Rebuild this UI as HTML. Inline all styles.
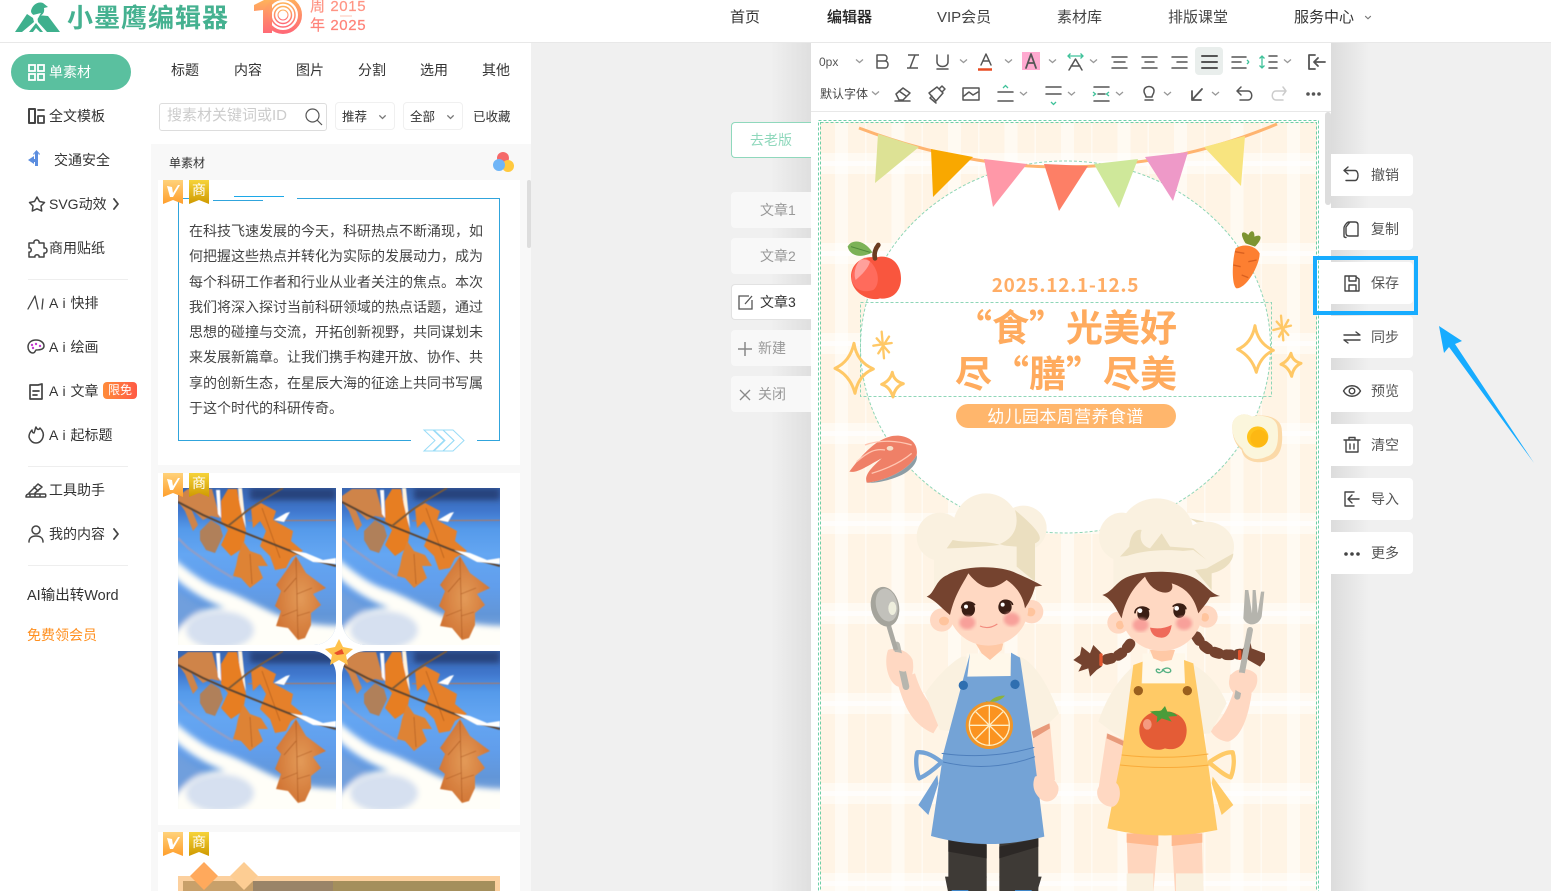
<!DOCTYPE html>
<html lang="zh-CN"><head><meta charset="utf-8"><title>小墨鹰编辑器</title>
<style>
*{box-sizing:border-box}
html,body{margin:0;padding:0;width:1551px;height:891px;overflow:hidden;background:#f0f0f0}
body{position:relative;font-family:"Liberation Sans","Noto Sans CJK SC",sans-serif;color:#333;font-size:14px}
.a{position:absolute}
.t{position:absolute;white-space:nowrap;line-height:20px}
svg{position:absolute;overflow:visible}
.ic{fill:none;stroke:#555;stroke-width:1.5;stroke-linecap:round;stroke-linejoin:round}
.card{position:absolute;left:158px;width:362px;background:#fff}
.im{position:absolute;width:158px;height:158px;overflow:hidden}
.tab{position:absolute;left:731px;width:80px;height:36px;background:#f8f8f8;border-radius:4px 0 0 4px}
.btn{position:absolute;left:1331px;width:82px;height:42px;background:#fff;border-radius:0 4px 4px 0}
.btn span{position:absolute;left:40px;top:11px;line-height:20px;font-size:14px;color:#555;white-space:nowrap}
.drop{position:absolute;top:102px;height:28px;border:1px solid #f0f0f0;border-radius:4px;background:#fff}
</style></head>
<body>
<svg width="0" height="0" style="position:absolute">
<defs>
<symbol id="chev" viewBox="0 0 10 6"><path d="M1.500 1.200 5 4.600 8.500 1.200" fill="none" stroke="#777" stroke-width="1.400"/></symbol>
<linearGradient id="sky" x1="0" y1="0" x2="0" y2="1"><stop offset="0" stop-color="#3a66b0"/><stop offset=".14" stop-color="#3f76cc"/><stop offset=".26" stop-color="#559aea"/><stop offset=".42" stop-color="#64a6f2"/><stop offset=".62" stop-color="#619eec"/><stop offset=".8" stop-color="#6296d8"/><stop offset="1" stop-color="#8fb0de"/></linearGradient>
<linearGradient id="bA" x1="0" y1="0" x2="0" y2="1"><stop offset="0" stop-color="#ffd27a"/><stop offset="1" stop-color="#ff9e2c"/></linearGradient>
<linearGradient id="bB" x1="0" y1="0" x2="0" y2="1"><stop offset="0" stop-color="#f6d33a"/><stop offset="1" stop-color="#cf9a00"/></linearGradient>
<linearGradient id="ten" x1="0" y1="0" x2="0" y2="1"><stop offset="0" stop-color="#ffb25b"/><stop offset="1" stop-color="#ff6a76"/></linearGradient>
<radialGradient id="lf1" cx=".5" cy=".5" r=".6"><stop offset="0" stop-color="#e39a58"/><stop offset="1" stop-color="#cf7030"/></radialGradient>
<filter id="b3"><feGaussianBlur stdDeviation="3"/></filter>
<filter id="b1"><feGaussianBlur stdDeviation=".5"/></filter>
<filter id="b2"><feGaussianBlur stdDeviation="5"/></filter>
<symbol id="leaf" viewBox="0 0 158 158">
<rect width="158" height="158" fill="url(#sky)"/>
<g filter="url(#b3)">
<rect x="72" y="0" width="86" height="12" fill="#27427c"/>
<path d="M-5 70 C5 78 20 92 40 100 C65 108 85 122 108 130 C125 136 145 138 165 138 V165 H-5 V148 C5 130 25 118 48 120 C25 112 8 100 -5 88Z" fill="#fffef8"/>
<path d="M-5 100 C8 108 18 116 26 120 C12 128 2 138 -5 148Z" fill="#6f9fdd"/>
<ellipse cx="42" cy="142" rx="34" ry="19" fill="#d6e0f0"/>
<path d="M95 158 L130 140 L160 140 L160 160Z" fill="#fffef8"/>
</g>
<path d="M0 50 L10 60 L35 78 L55 90" stroke="#8b9ecb" stroke-width="2.500" fill="none" filter="url(#b1)"/>
<path d="M70 33 L158 32" stroke="#8f7f88" stroke-width="2" fill="none" filter="url(#b1)"/>
<g filter="url(#b1)" stroke-linejoin="round">
<path d="M0 8 10 1 34 1 42 30 33 28 25 32 13 20 20 37 15 43 7 23 0 13Z" fill="#cf8448"/>
<path d="M38 2 42 2 43 30 40 26Z" fill="#fff"/>
<path d="M60 0H64L68 40 62 22Z" fill="#fff3dd"/>
<path d="M22 43 33 32 42 38 45 48 37 65 28 62 22 52Z" fill="#b0805a"/>
<path d="M50 1 59 1 62 17 68 43 65 60 53 68 43 57 50 42 43 33 43 13Z" fill="#e77e20"/>
<path d="M65 53 72 63 83 67 90 78 80 78 85 90 72 100 63 90 55 88 58 78 60 68Z" fill="#de8336"/>
<path d="M73 20 83 15 98 23 95 32 115 43 113 53 125 63 113 70 108 80 97 82 92 68 82 58 88 43 82 33 75 40Z" fill="#e58029"/>
<path d="M118 68 128 85 148 100 135 106 143 117 133 125 133 137 127 150 120 152 110 140 98 138 103 123 97 118 103 103 98 97 110 80Z" fill="url(#lf1)"/>
<path d="M118 70 120 150M118 90 106 104M119 106 134 100M119 122 104 128M119 128 132 124M84 20 102 70M72 66 74 96" stroke="#a9551c" stroke-width=".6" fill="none"/>
</g>
<path d="M0 14 L25 27 L50 38 L80 50 L110 62 L140 73 L158 78" stroke="#5d4430" stroke-width="2" fill="none" filter="url(#b1)"/>
<path d="M50 38 L70 22 L85 12 L105 0" stroke="#7a5a38" stroke-width="1.800" fill="none" filter="url(#b1)"/>
<path d="M112 62 L128 65 L145 72 L158 70 L158 76 L135 74Z" fill="#fff" filter="url(#b1)"/>
<path d="M96 32 L108 25 L112 24 L106 34Z" fill="#fff" filter="url(#b1)"/>
</symbol>
<symbol id="bdA" viewBox="0 0 20 24"><path d="M0 0H20V24L10 20 0 24Z" fill="url(#bA)"/><path d="M4 6 9 7 10 13 15 5 17 5 10 17 7 17Z" fill="#fff"/></symbol>
<symbol id="bdB" viewBox="0 0 20 24"><path d="M0 0H20V24L10 20 0 24Z" fill="url(#bB)"/></symbol>
</defs>
</svg>

<!-- editor backdrop gradients -->
<div class="a" style="left:770px;top:43px;width:41px;height:848px;background:linear-gradient(90deg,#f0f0f0,#dfdfdf)"></div>
<div class="a" style="left:1331px;top:43px;width:38px;height:848px;background:linear-gradient(90deg,#dcdcdc,#f0f0f0)"></div>

<!-- header -->
<div class="a" style="left:0;top:0;width:1551px;height:43px;background:#fff;border-bottom:1px solid #e8e8e8"></div>
<svg style="left:0;top:0" width="320" height="42">
<g fill="#3eb08d">
<path d="M15 32 27 14 33 18 34 22 22 32Z"/>
<path d="M37 15 48 16 60 32 47 32 38 22Z"/>
<path d="M29 32 36 23 43 32 40 32 36 28 33 32Z"/>
<path d="M31 11C32 5 38 1 43 3L48 7 44 8C45 13 42 16 38 16 34 16 31 14 31 11Z"/>
</g>
<path d="M33 15 41 13 37 20Z" fill="#fff"/>
<path d="M254 5 264 0H272V33H263V10L254 11Z" fill="url(#ten)"/>
<circle cx="283" cy="15" r="17" fill="none" stroke="url(#ten)" stroke-width="4"/>
<circle cx="283" cy="15" r="12" fill="none" stroke="url(#ten)" stroke-width="1.500"/>
<circle cx="283" cy="15" r="8.500" fill="none" stroke="url(#ten)" stroke-width="1.500"/>
<circle cx="283" cy="15" r="5" fill="none" stroke="url(#ten)" stroke-width="1"/>
<path d="M340 16H352" stroke="#ffc5b5" stroke-width="1"/>
</svg>
<div class="t" style="left:67px;top:4px;font-size:26px;line-height:28px;font-weight:700;letter-spacing:1px;color:#45b190">小墨鹰编辑器</div>
<div class="t" style="left:310px;top:-3px;font-size:15px;color:#ff9484;letter-spacing:.6px;-webkit-text-stroke:.2px #ff9484">周 2015</div>
<div class="t" style="left:310px;top:16px;font-size:15px;color:#ff8278;letter-spacing:.6px;-webkit-text-stroke:.2px #ff8278">年 2025</div>
<div class="t" style="left:730px;top:8px;color:#333;font-size:15px">首页</div>
<div class="t" style="left:827px;top:8px;color:#222;font-size:15px;-webkit-text-stroke:.3px #222">编辑器</div>
<div class="t" style="left:937px;top:8px;color:#444;font-size:15px">VIP会员</div>
<div class="t" style="left:1057px;top:8px;color:#444;font-size:15px">素材库</div>
<div class="t" style="left:1168px;top:8px;color:#444;font-size:15px">排版课堂</div>
<div class="t" style="left:1294px;top:8px;color:#333;font-size:15px">服务中心</div>
<svg style="left:1364px;top:15px" width="8" height="5"><use href="#chev" width="8" height="5"/></svg>

<!-- sidebar -->
<div class="a" style="left:0;top:43px;width:151px;height:848px;background:#fff"></div>
<div class="a" style="left:11px;top:54px;width:120px;height:36px;border-radius:18px;background:#5ac09f"></div>
<div class="t" style="left:49px;top:62px;color:#fff;font-size:14px">单素材</div>
<svg style="left:0;top:0" width="151" height="660">
<g fill="none" stroke="#fff" stroke-width="1.800"><rect x="29" y="65" width="6" height="6"/><rect x="38" y="65" width="6" height="6"/><rect x="29" y="74" width="6" height="6"/><rect x="38" y="74" width="6" height="6"/></g>
<g class="ic" style="stroke:#444">
<rect x="29" y="109" width="6" height="14" stroke-width="2"/><path d="M38 110h6M38 116h6v7h-6z" stroke-width="1.800"/>
<path d="M37 197l2.500 4.500 5 1-3.500 3.500 .7 5-4.700-2.200-4.700 2.200 .7-5-3.500-3.500 5-1z"/>
<path d="M29 243h5c-1-4 6-4 5 0h5v5c4-1 4 6 0 5v4h-5c1-3-5-3-4 0h-6v-5c3 1 3-5 0-4z"/>
<path d="M28 309 35 296 38 309M43 299l-1 10" stroke-width="1.300"/>
<path d="M36 340c-5 0-8 3-8 7 0 3 2 6 5 6 2 0 2-2 3-3 2 0 8 0 8-4 0-3-3-6-8-6z"/>
<path d="M30 385h8l4-1v15H30zM33 391h6M33 395h4" stroke-width="1.700"/>
<path d="M36 427c1 3 3 3 4 1 3 3 4 6 3 9-1 4-4 6-7 6s-6-2-7-6c0-3 1-5 3-7 0 2 1 3 2 3 1-2 1-4 2-6z"/>
<path d="M26 497c0-2 1-3 3-3h16c1 0 1 3 0 3zM29 493l9-9 4 3-7 6M34 487l4 4M30 497v-3M35 497v-3M40 497v-3"/>
<circle cx="36" cy="530" r="4"/><path d="M29 542c0-4 3-6 7-6s7 2 7 6"/>
<path d="M114 199l4 5-4 5M114 529l4 5-4 5" stroke-width="1.800"/>
</g>
<path d="M35 153v13h3v-13l1 2 1-1-3.500-4-3.500 4 1 1z" fill="#5b8ddf"/><path d="M28 160l6-4v3h1v3h-1v2z" fill="#5b8ddf"/>
<circle cx="32" cy="345" r="1.200" fill="#c33bd0"/><circle cx="36" cy="344" r="1.200" fill="#c33bd0"/><circle cx="40" cy="346" r="1.200" fill="#c33bd0"/><circle cx="33" cy="348" r="1.200" fill="#c33bd0"/>
<rect x="28" y="279" width="100" height="1" fill="#eee"/>
<rect x="28" y="466" width="100" height="1" fill="#eee"/>
<rect x="28" y="565" width="100" height="1" fill="#eee"/>
</svg>
<div class="t" style="left:49px;top:106px">全文模板</div>
<div class="t" style="left:54px;top:150px">交通安全</div>
<div class="t" style="left:49px;top:194px">SVG动效</div>
<div class="t" style="left:49px;top:238px">商用贴纸</div>
<div class="t" style="left:49px;top:293px;word-spacing:1px">A i 快排</div>
<div class="t" style="left:49px;top:337px;word-spacing:1px">A i 绘画</div>
<div class="t" style="left:49px;top:381px;word-spacing:1px">A i 文章</div>
<div class="t" style="left:103px;top:382px;width:34px;height:17px;line-height:17px;text-align:center;border-radius:4px;background:linear-gradient(90deg,#ff8c3a,#ff5a45);color:#fff;font-size:12px">限免</div>
<div class="t" style="left:49px;top:425px;word-spacing:1px">A i 起标题</div>
<div class="t" style="left:49px;top:480px">工具助手</div>
<div class="t" style="left:49px;top:524px">我的内容</div>
<div class="t" style="left:27px;top:586px;font-size:14.500px">AI输出转Word</div>
<div class="t" style="left:27px;top:625px;font-size:14px;color:#ff8f1f">免费领会员</div>

<!-- material panel -->
<div class="a" style="left:151px;top:43px;width:380px;height:101px;background:#fff"></div>
<div class="a" style="left:151px;top:144px;width:380px;height:747px;background:#f8f8f8"></div>
<div class="t" style="left:171px;top:60px">标题</div>
<div class="t" style="left:234px;top:60px">内容</div>
<div class="t" style="left:296px;top:60px">图片</div>
<div class="t" style="left:358px;top:60px">分割</div>
<div class="t" style="left:420px;top:60px">选用</div>
<div class="t" style="left:482px;top:60px">其他</div>
<div class="a" style="left:159px;top:103px;width:168px;height:28px;border:1px solid #ddd;border-radius:3px;background:#fff"></div>
<div class="t" style="left:167px;top:106px;color:#ccc;font-size:15px">搜素材关键词或ID</div>
<svg style="left:304px;top:107px" width="20" height="20"><circle cx="8.500" cy="8.500" r="6.500" fill="none" stroke="#555" stroke-width="1.200"/><path d="M13 13l5 5" stroke="#555" stroke-width="1.200"/></svg>
<div class="drop" style="left:335px;width:60px"></div>
<div class="t" style="left:342px;top:107px;font-size:12.500px;color:#333">推荐</div>
<svg style="left:378px;top:114px" width="9" height="6"><use href="#chev" width="9" height="6"/></svg>
<div class="drop" style="left:403px;width:60px"></div>
<div class="t" style="left:410px;top:107px;font-size:12.500px;color:#333">全部</div>
<svg style="left:446px;top:114px" width="9" height="6"><use href="#chev" width="9" height="6"/></svg>
<div class="t" style="left:473px;top:107px;font-size:12.500px;color:#333">已收藏</div>
<div class="t" style="left:169px;top:153px;font-size:12px">单素材</div>
<svg style="left:490px;top:150px" width="26" height="26"><circle cx="13" cy="8" r="6" fill="#f5696a"/><circle cx="18" cy="16" r="6" fill="#ffc93f"/><circle cx="9" cy="15" r="6" fill="#6fb5f7"/></svg>
<div class="a" style="left:527px;top:180px;width:4px;height:68px;background:#ddd;border-radius:2px"></div>

<!-- card 1 -->
<div class="card" style="top:180px;height:285px"></div>
<svg style="left:158px;top:180px" width="362" height="285">
<path d="M20.500 18.500H31M20.500 18.500V260.500H253M319 260.500H341.500V18.500H139" fill="none" stroke="#30a4dc" stroke-width="1"/>
<path d="M55 20.500H105" stroke="#30a4dc" stroke-width="1"/><path d="M76 16.500H126" stroke="#1ca8e8" stroke-width="1"/>
<g fill="none" stroke="#9adcf7" stroke-width="1"><path d="M266 250h10l11 10.500-11 10.500h-10l11-10.500z"/><path d="M275 250h10l11 10.500-11 10.500h-10l11-10.500z"/><path d="M285 250h10l11 10.500-11 10.500h-10l11-10.500z"/></g>
<use href="#bdA" x="5" y="0" width="20" height="24"/><use href="#bdB" x="31" y="0" width="20" height="24"/>
</svg>
<div class="t" style="left:192px;top:181px;color:#fff;font-size:14px;line-height:18px">商</div>
<div class="a" style="left:189px;top:219px;width:296px;font-size:14px;line-height:25.300px;color:#444">在科技飞速发展的今天，科研热点不断涌现，如<br>何把握这些热点并转化为实际的发展动力，成为<br>每个科研工作者和行业从业者关注的焦点。本次<br>我们将深入探讨当前科研领域的热点话题，通过<br>思想的碰撞与交流，开拓创新视野，共同谋划未<br>来发展新篇章。让我们携手构建开放、协作、共<br>享的创新生态，在星辰大海的征途上共同书写属<br>于这个时代的科研传奇。</div>

<!-- card 2 -->
<div class="card" style="top:473px;height:352px"></div>
<div class="im" style="left:178px;top:488px;height:157px;border-bottom-right-radius:22px"><svg width="158" height="158"><use href="#leaf" width="158" height="158"/></svg></div>
<div class="im" style="left:342px;top:488px;height:157px;border-bottom-left-radius:24px"><svg width="158" height="158"><use href="#leaf" width="158" height="158"/></svg></div>
<div class="im" style="left:178px;top:651px;border-top-right-radius:24px"><svg width="158" height="158"><use href="#leaf" width="158" height="158"/></svg></div>
<div class="im" style="left:342px;top:651px;border-top-left-radius:24px"><svg width="158" height="158"><use href="#leaf" width="158" height="158"/></svg></div>
<svg style="left:158px;top:473px" width="362" height="352">
<use href="#bdA" x="5" y="0" width="20" height="24"/><use href="#bdB" x="31" y="0" width="20" height="24"/>
<path d="M181 166l4 8 10 2-7 6 2 10-9-5-9 5 2-10-7-6 10-2z" fill="#ffc24c"/><path d="M176 180l8-4 2 5-7 1z" fill="#e8502a"/>
</svg>
<div class="t" style="left:192px;top:474px;color:#fff;font-size:14px;line-height:18px">商</div>

<!-- card 3 -->
<div class="card" style="top:832px;height:59px"></div>
<svg style="left:158px;top:832px" width="362" height="59">
<use href="#bdA" x="5" y="0" width="20" height="24"/><use href="#bdB" x="31" y="0" width="20" height="24"/>
<rect x="20" y="44" width="322" height="15" fill="#fcd09e"/>
<rect x="25" y="49" width="312" height="10" fill="#9a8468"/><rect x="25" y="49" width="70" height="10" fill="#c8a06a"/><rect x="175" y="49" width="162" height="10" fill="#a48f5c"/>
<path d="M46 30 60 44 46 58 32 44Z" fill="#ffa95c"/><path d="M86 30 100 44 86 58 72 44Z" fill="#fdcd93"/>
</svg>
<div class="t" style="left:192px;top:833px;color:#fff;font-size:14px;line-height:18px">商</div>

<!-- article tabs -->
<div class="a" style="left:731px;top:122px;width:80px;height:36px;background:#fff;border:1px solid #8fd8bc;border-right:0;border-radius:4px 0 0 4px"></div>
<div class="t" style="left:750px;top:130px;color:#8fd8bc;font-size:14px">去老版</div>
<div class="tab" style="top:192px"></div><div class="t" style="left:760px;top:200px;color:#999">文章1</div>
<div class="tab" style="top:238px"></div><div class="t" style="left:760px;top:246px;color:#999">文章2</div>
<div class="tab" style="top:284px;background:#fff;border:1px solid #e2e2e2;border-right:0;"></div><div class="t" style="left:760px;top:292px;color:#333">文章3</div>
<div class="tab" style="top:330px"></div><div class="t" style="left:758px;top:338px;color:#999">新建</div>
<div class="tab" style="top:376px"></div><div class="t" style="left:758px;top:384px;color:#999">关闭</div>
<svg style="left:731px;top:284px" width="30" height="130">
<path d="M18 12H8V25H21V16M14 20l7-8" fill="none" stroke="#555" stroke-width="1.300"/>
<path d="M14 58v14M7 65h14" stroke="#888" stroke-width="1.500" fill="none"/>
<path d="M9 106l10 10M19 106 9 116" stroke="#888" stroke-width="1.300" fill="none"/>
</svg>

<!-- editor -->
<div class="a" style="left:811px;top:43px;width:520px;height:848px;background:#fff"></div>
<div class="a" style="left:811px;top:111px;width:520px;height:1px;background:#e8e8e8"></div>
<div class="a" style="left:1195px;top:47px;width:28px;height:28px;background:#e9eeec;border-radius:4px"></div>
<div class="a" style="left:1022px;top:52px;width:18px;height:18px;background:#ffaad0"></div>
<div class="t" style="left:819px;top:52px;font-size:12px;color:#555">0px</div>
<div class="t" style="left:820px;top:84px;font-size:12px;color:#444">默认字体</div>
<svg style="left:811px;top:43px" width="520" height="69">
<g fill="none" stroke="#999" stroke-width="1.300">
<path d="M45 16.500l3.500 3 3.500-3M149 16.500l3.500 3 3.500-3M194 16.500l3.500 3 3.500-3M238 16.500l3.500 3 3.500-3M279 16.500l3.500 3 3.500-3M473 16.500l3.500 3 3.500-3M61 48.500l3.500 3 3.500-3M209 49l3.500 3 3.500-3M257 49l3.500 3 3.500-3M305 49l3.500 3 3.500-3M353 49l3.500 3 3.500-3M401 49l3.500 3 3.500-3"/></g>
<g class="ic">
<path d="M66 12h7c4 0 4 6 0 6h-7zM66 18h8c4 0 4 7 0 7h-8z"/>
<path d="M97 12h11M96 25h11M104 12l-5 13" stroke-linecap="butt"/>
<path d="M126 12v7c0 6 11 6 11 0v-7M126 26h11" />
<path d="M170 22l5-11 5 11M172 18h6"/>
<path d="M215 25l5-14 5 14M217 20h6" stroke-width="1.800"/>
<path d="M258 27l6.500-11 6.500 11M260 23h9" stroke-width="1.500"/>
<path d="M301 14h15M303 19h11M301 25h15"/>
<path d="M331 14h15M334 19h9M331 25h15"/>
<path d="M361 14h15M366 19h10M361 25h15"/>
<path d="M391 13h15M391 19h15M391 25h15" stroke-width="2"/>
<path d="M421 14h14M421 19h9M421 25h14"/>
<path d="M458 13h8M458 19h8M458 25h8"/>
<path d="M504 12h-6v14h6M514 19h-11M507 15l-4 4 4 4" stroke-width="1.800"/>
<path d="M85 51l7-6 7 5-7 7h-4zM84 58h15M88 48l7 5"/>
<path d="M118 50l8-6 6 6-7 8zM121 53l-2 2 6 5M128 46l3-3 3 3-3 3"/>
<rect x="152" y="45" width="16" height="12"/><path d="M153 53l5-4 4 3 5-3"/>
<path d="M187 49h15M187 58h15"/>
<path d="M235 44h15M235 51h15"/>
<path d="M283 44h15M283 58h15M287 51h7"/>
<path d="M333 48c0-6 10-6 10 0 0 3-2 4-2 6h-6c0-2-2-3-2-6zM334 57h8"/>
<path d="M381 57l10-11M381 48v9h9" stroke-width="1.800"/>
<path d="M430 44l-4 4 4 4M426 48h11c5 0 5 9 0 9h-8"/>
<path d="M472 44l3 4-3 4M475 48h-10c-5 0-5 9 0 9h7" style="stroke:#ccc"/>
</g>
<path d="M167 26.500h14" stroke="#e84c22" stroke-width="2.500"/>
<g fill="none" stroke="#3fc29a" stroke-width="1.300"><path d="M451 13v12M448.500 15.500l2.500-2.500 2.500 2.500M448.500 22.500l2.500 2.500 2.500-2.500M438 19l-2-2M438 19l-2 2M192 45l2.500-2.500 2.500 2.500M240 59l2.500 2.500 2.500-2.500M282 49l2.500 2-2.500 2M298 49l-2.500 2 2.500 2M257 13h15M259.500 10.500 257 13l2.500 2.500M269.500 10.500 272 13l-2.500 2.500"/></g>
<g fill="#555"><circle cx="497" cy="51" r="1.800"/><circle cx="502.500" cy="51" r="1.800"/><circle cx="508" cy="51" r="1.800"/></g>
</svg>
<div class="a" style="left:1325px;top:112px;width:6px;height:93px;background:#ddd;border-radius:3px"></div>

<!-- poster -->
<div class="a" id="poster" style="left:820px;top:122px;width:497px;height:769px;background-color:#fff4e5;background-image:linear-gradient(180deg,rgba(255,255,255,0) 31px,rgba(255,255,255,.5) 31px,rgba(255,255,255,.5) 39px,rgba(255,255,255,.85) 39px,rgba(255,255,255,.85) 44px,rgba(255,255,255,.5) 44px,rgba(255,255,255,.5) 52px,rgba(255,255,255,0) 52px),linear-gradient(90deg,rgba(255,255,255,0) 15px,rgba(255,255,255,.5) 15px,rgba(255,255,255,.5) 28px,rgba(255,255,255,0) 28px,rgba(255,255,255,0) 45px,rgba(255,255,255,.5) 45px,rgba(255,255,255,.5) 46.500px,rgba(255,255,255,0) 46.500px);background-size:100% 90px,56.500px 100%"></div>
<svg style="left:0;top:0" width="1551" height="891">
<ellipse cx="1065.500" cy="347" rx="205" ry="186" fill="#fff" stroke="#8ed6b7" stroke-width="1" stroke-dasharray="3 2"/>
<rect x="860.500" y="302.500" width="411" height="94" fill="none" stroke="#8ed6b7" stroke-width="1" stroke-dasharray="3 2"/>
<rect x="820.500" y="122.500" width="496" height="780" fill="none" stroke="#6fcfa8" stroke-width="1" stroke-dasharray="3 2"/>
<rect x="818.500" y="120.500" width="500" height="780" fill="none" stroke="#6fcfa8" stroke-width="1" stroke-dasharray="3 2"/>
<path d="M859 128C930 155 1000 167 1060 167C1140 167 1210 152 1277 124" fill="none" stroke="#ffb470" stroke-width="3"/>
<polygon points="878,134 919,147 875,183" fill="#dde295"/>
<polygon points="931,149 973,157 933,197" fill="#f9a800"/>
<polygon points="984,159 1027,164 993,207" fill="#ff98a8"/>
<polygon points="1044,164 1088,166 1059,211" fill="#fd7f66"/>
<polygon points="1094,164 1138,159 1119,208" fill="#cfe89a"/>
<polygon points="1145,157 1188,152 1173,201" fill="#ee99c8"/>
<polygon points="1204,147 1245,136 1241,186" fill="#f8e47f"/>
<rect x="956" y="404" width="220" height="24" rx="12" fill="#ffb66c"/>
<text x="1065.500" y="292" text-anchor="middle" font-size="19" font-weight="700" letter-spacing=".7" fill="#ffad66" font-family="'Noto Sans CJK SC',sans-serif">2025.12.1-12.5</text>
<text x="955" y="341" font-size="37" font-weight="700" fill="#ffab5e" font-family="'Noto Sans CJK SC',sans-serif">“食”光美好</text>
<text x="955" y="387" font-size="37" font-weight="700" fill="#ffab5e" font-family="'Noto Sans CJK SC',sans-serif">尽“膳”尽美</text>
<text x="1065.500" y="422.500" text-anchor="middle" font-size="17" letter-spacing=".4" fill="#fff" font-family="'Noto Sans CJK SC',sans-serif">幼儿园本周营养食谱</text>

<!-- decorations, coords in zoom4 space -->
<g transform="translate(815 115) scale(.33333)">
<path d="M98 395C110 370 150 375 172 412 140 430 105 425 98 395Z" fill="#7cb257"/>
<path d="M108 395 165 412" stroke="#4f8a3a" stroke-width="3" fill="none"/>
<path d="M182 428C225 415 258 445 258 490 258 535 225 555 195 550 170 560 110 540 108 485 108 445 145 420 182 428Z" fill="#f9563e"/>
<path d="M150 428C125 440 108 465 110 495 118 525 145 535 175 525 200 505 190 450 150 428Z" fill="#ff6b5c"/>
<path d="M135 435C120 450 115 480 122 495 140 480 160 460 165 440 155 432 145 432 135 435Z" fill="#ffa09b"/>
<path d="M180 430C176 415 182 400 190 390" stroke="#6b3c22" stroke-width="14" fill="none" stroke-linecap="round"/>
<path d="M1292 385C1270 350 1285 345 1300 360 1310 340 1320 350 1318 365 1340 355 1345 370 1320 395Z" fill="#7d9431"/>
<path d="M1262 400C1285 385 1320 390 1334 415 1334 450 1295 520 1265 520 1250 515 1250 440 1262 400Z" fill="#fd7f31"/>
<path d="M1260 410l28 5M1255 450l22 5M1300 440l25-5M1280 480l20 8" stroke="#d9601f" stroke-width="4" fill="none"/>
<path d="M103 1070C140 1020 190 960 250 962 290 965 310 990 305 1020 280 1070 200 1100 155 1103 150 1085 155 1070 200 1030 160 1050 130 1075 103 1070Z" fill="#ef8067"/>
<path d="M155 1103C200 1100 280 1070 305 1020 310 1040 290 1065 260 1080 220 1098 180 1105 155 1103Z" fill="#8d9da5"/>
<path d="M150 990C190 975 240 975 290 990M125 1040C160 1010 180 1000 210 1005M170 1075C220 1060 260 1040 290 1015" stroke="#ffc6b2" stroke-width="4" fill="none"/>
<ellipse cx="225" cy="1000" rx="10" ry="7" fill="#f6dfc9"/>
<path d="M1252 930C1255 900 1290 890 1310 905 1345 895 1395 905 1400 940 1405 985 1400 1025 1365 1035 1330 1050 1285 1040 1280 1005 1262 990 1250 965 1252 930Z" fill="#fbd9a8"/>
<path d="M1252 930C1255 900 1290 890 1310 905 1345 898 1385 905 1388 940 1392 985 1385 1015 1355 1025 1325 1040 1292 1030 1282 1000 1262 985 1250 960 1252 930Z" fill="#fbf6dc"/>
<circle cx="1328" cy="966" r="32" fill="#ffc31c"/><circle cx="1332" cy="970" r="26" fill="#fdb813"/>
<g fill="none" stroke="#ffc866" stroke-width="9" stroke-linejoin="round">
<path d="M117 685Q125 740 175 762 130 780 120 835 105 780 60 760 105 740 117 685Z"/>
<path d="M232 772Q236 798 265 806 240 815 234 846 225 815 200 808 225 798 232 772Z"/>
<path d="M1320 632Q1328 685 1375 706 1335 725 1324 772 1310 725 1268 703 1310 685 1320 632Z"/>
<path d="M1428 715Q1432 738 1458 745 1435 755 1430 784 1420 755 1398 748 1420 738 1428 715Z"/>
</g>
<g stroke="#ffc866" stroke-width="7" stroke-linecap="round" fill="none">
<path d="M200 650 207 730M175 692 230 684M185 670 222 712M222 665 190 715"/>
<path d="M1398 602 1405 676M1375 645 1428 632M1385 620 1420 660M1420 615 1392 665"/>
</g>
</g>

<!-- kids, coords in zoom5 space -->
<g transform="translate(860 490) scale(.33333)">
<!-- boy -->
<rect x="265" y="1040" width="115" height="175" fill="#3e3a36"/><rect x="418" y="1040" width="117" height="175" fill="#3e3a36"/>
<path d="M265 1050 380 1065V1105L265 1085ZM418 1070 535 1045V1070L418 1105Z" fill="#2c2826"/>
<path d="M255 1160 380 1160 375 1210H265ZM418 1160 545 1160 530 1210H425Z" fill="#3e3a36"/>
<path d="M275 1200h50v10h-50zM465 1200h50v10h-50z" fill="#3f86c9"/>
<g fill="#faf1e0"><ellipse cx="378" cy="115" rx="100" ry="105"/><ellipse cx="240" cy="140" rx="70" ry="72"/><ellipse cx="490" cy="115" rx="70" ry="68"/><rect x="222" y="160" width="305" height="140"/></g>
<path d="M465 60C480 110 460 150 410 165L470 170 470 230 525 275V160C550 150 550 130 465 60Z" fill="#ebdfc0"/>
<path d="M235 185C280 165 350 160 400 150 420 170 460 170 465 170L465 240 240 240Z" fill="#faf1e0"/>
<path d="M278 150C320 160 380 150 420 165 370 170 300 175 260 175Z" fill="#ebdfc0"/>
<path d="M220 730C150 700 130 640 110 570L165 550C180 600 200 640 250 680Z" fill="#ffd8c2"/>
<path d="M515 720 570 700 585 870 530 870Z" fill="#ffd8c2"/>
<path d="M305 500 480 500C530 520 570 600 597 670L520 745 240 720 195 610C230 560 270 520 305 500Z" fill="#faf1e0"/>
<path d="M515 725 568 700 570 715 520 745Z" fill="#e89a7a"/>
<path d="M320 490 450 490V560H320Z" fill="#fff8ea"/>
<circle cx="245" cy="390" r="35" fill="#ffd8c2"/><circle cx="515" cy="365" r="35" fill="#ffd8c2"/>
<ellipse cx="252" cy="393" rx="15" ry="13" fill="#ffc49d"/><ellipse cx="512" cy="366" rx="14" ry="13" fill="#ffc49d"/>
<path d="M347 460H430L425 480 390 510 365 490Z" fill="#ffc9a6"/>
<ellipse cx="385" cy="352" rx="120" ry="115" fill="#ffd8c2"/>
<path d="M200 320C225 310 225 270 262 255 310 225 420 225 470 250 505 265 525 275 547 287L525 290C520 310 512 330 495 355 490 320 470 290 440 270 400 300 370 305 325 250 310 280 285 310 270 375 245 355 225 330 200 320Z" fill="#75432f"/>
<ellipse cx="325" cy="358" rx="20" ry="22" fill="#3a1e14"/><ellipse cx="435" cy="351" rx="20" ry="22" fill="#3a1e14"/>
<path d="M305 355C305 335 330 330 345 345" stroke="#3a1e14" stroke-width="5" fill="none"/><path d="M420 340C430 325 455 330 458 345" stroke="#3a1e14" stroke-width="5" fill="none"/>
<circle cx="318" cy="350" r="6" fill="#fff"/><circle cx="428" cy="344" r="6" fill="#fff"/>
<ellipse cx="322" cy="398" rx="24" ry="20" fill="#f8a09a" filter="url(#b2)"/><ellipse cx="455" cy="388" rx="24" ry="20" fill="#f8a09a" filter="url(#b2)"/>
<path d="M360 408Q385 420 412 402" stroke="#f28a7d" stroke-width="3.500" fill="none"/>
<path d="M330 490 322 560 452 558 453 488 480 503 520 775 553 1040Q380 1085 213 1038L250 790Z" fill="#74a3d6"/>
<circle cx="310" cy="586" r="14" fill="#2f6fb0"/><circle cx="465" cy="583" r="14" fill="#2f6fb0"/>
<path d="M245 790Q390 810 523 772M245 815Q390 850 525 800" stroke="#4e7fbc" stroke-width="3" fill="none"/>
<path d="M375 632C395 640 420 635 435 617 415 615 395 625 385 640Z" fill="#8db33c"/>
<circle cx="388" cy="706" r="71" fill="#ef9528"/><circle cx="388" cy="706" r="62" fill="#ffeec4"/><circle cx="388" cy="706" r="58" fill="#fb9320"/>
<path d="M388 648V764M330 706H446M347 665 429 747M429 665 347 747" stroke="#ffeec4" stroke-width="4"/>
<path d="M243 815C210 790 190 785 172 787 165 810 170 850 178 865 200 855 225 835 243 818Z" fill="none" stroke="#74a3d6" stroke-width="13" stroke-linejoin="round"/>
<path d="M232 855 175 945 205 975 235 880Z" fill="#74a3d6"/>
<path d="M84 480C105 470 145 480 158 510 165 550 150 590 115 590 85 580 70 520 84 480Z" fill="#ffd8c2"/>
<path d="M110 465 138 590" stroke="#b7b6ae" stroke-width="20" stroke-linecap="round"/>
<path d="M84 400 108 480" stroke="#aaa9a2" stroke-width="14"/>
<ellipse cx="75" cy="350" rx="42" ry="60" transform="rotate(-12 75 350)" fill="#a5a49c"/><ellipse cx="80" cy="345" rx="32" ry="50" transform="rotate(-12 80 345)" fill="#c2c1bb"/><ellipse cx="97" cy="355" rx="12" ry="20" fill="#eeeedd"/>
<path d="M85 490C105 480 140 490 155 510 162 530 140 545 130 545 100 540 80 520 85 490Z" fill="#ffd8c2"/>
<path d="M525 860C550 850 580 855 595 890 600 920 570 945 545 930 520 910 515 885 525 860Z" fill="#ffd8c2"/>
<!-- girl -->
<path d="M800 1030H895L880 1210H805ZM935 1030H1025L1030 1210H945Z" fill="#ffd6be"/>
<path d="M800 1030H895V1068L800 1058ZM935 1030H1027V1058L935 1068Z" fill="#ffb98e"/>
<path d="M800 1150H880V1210H800ZM948 1150H1030V1210H948Z" fill="#faf1e0"/>
<g fill="#faf1e0"><ellipse cx="890" cy="125" rx="110" ry="100"/><ellipse cx="785" cy="140" rx="68" ry="72"/><ellipse cx="1040" cy="170" rx="82" ry="75"/><rect x="760" y="170" width="295" height="140"/></g>
<path d="M1040 235 1120 190C1120 210 1100 240 1055 250L1055 300 1005 240Z" fill="#ebdfc0"/>
<path d="M808 170C810 140 825 115 845 120 835 150 850 170 870 175L905 130 930 170 1000 175 1040 210 1000 180 780 200Z" fill="#ebdfc0"/>
<path d="M775 210C830 175 960 175 1005 190V250H775Z" fill="#faf1e0"/>
<path d="M990 85 1035 95 1010 98Z" fill="#ebdfc0"/>
<path d="M1050 720C1090 690 1110 640 1125 590L1175 610C1165 680 1145 740 1105 755 1085 755 1060 740 1050 720Z" fill="#ffd8c2"/>
<path d="M740 730 795 750 775 900H715Z" fill="#ffd8c2"/>
<path d="M830 520H990C1040 540 1080 590 1100 640L1050 730 790 750 715 695C740 620 780 560 830 520Z" fill="#faf1e0"/>
<path d="M742 730 795 755 790 768 740 745Z" fill="#e89a7a"/>
<path d="M848 490H975V585H848Z" fill="#fff8ea"/>
<path d="M870 480H945L935 510 905 515 880 505Z" fill="#ffc9a6"/>
<path d="M900 540C885 530 885 550 900 548L912 540C895 545 925 525 932 540 935 552 910 548 912 540" fill="none" stroke="#57b184" stroke-width="4"/>
<path d="M810 462C790 490 770 505 728 510" stroke="#75432f" stroke-width="32" stroke-dasharray="14 22" stroke-linecap="round" fill="none"/>
<path d="M1010 440C1040 490 1090 500 1140 492" stroke="#75432f" stroke-width="32" stroke-dasharray="14 22" stroke-linecap="round" fill="none"/>
<path d="M725 490 700 465 690 490 665 470 660 495 640 510 665 525 655 545 685 535 690 560 710 540 725 530Z" fill="#75432f"/>
<path d="M1145 480 1170 450 1175 475 1215 490 1215 510 1200 530 1165 510Z" fill="#75432f"/>
<rect x="718" y="490" width="10" height="38" fill="#e4562f" rx="4"/><rect x="1134" y="480" width="10" height="30" fill="#e4562f" rx="4"/>
<circle cx="775" cy="398" r="33" fill="#ffd8c2"/><circle cx="1040" cy="380" r="33" fill="#ffd8c2"/>
<ellipse cx="780" cy="405" rx="12" ry="13" fill="#ffc49d"/><ellipse cx="1035" cy="382" rx="12" ry="13" fill="#ffc49d"/>
<ellipse cx="905" cy="365" rx="122" ry="118" fill="#ffd8c2"/>
<path d="M727 315C760 305 770 270 810 258 860 240 960 240 1005 265 1040 285 1050 310 1080 318L1050 322C1040 340 1030 350 1015 370 1005 330 985 295 935 280 950 320 880 320 855 260 835 280 800 310 785 385 770 360 755 325 727 315Z" fill="#75432f"/>
<ellipse cx="850" cy="372" rx="18" ry="21" fill="#3a1e14"/><ellipse cx="958" cy="363" rx="18" ry="21" fill="#3a1e14"/>
<path d="M825 370C825 350 850 345 868 360" stroke="#3a1e14" stroke-width="5" fill="none"/><path d="M938 350C950 338 975 340 978 358" stroke="#3a1e14" stroke-width="5" fill="none"/>
<circle cx="840" cy="362" r="7" fill="#fff"/><circle cx="950" cy="355" r="7" fill="#fff"/>
<ellipse cx="842" cy="405" rx="24" ry="20" fill="#f8a09a" filter="url(#b2)"/><ellipse cx="972" cy="400" rx="24" ry="20" fill="#f8a09a" filter="url(#b2)"/>
<path d="M870 413Q905 420 935 405 930 445 902 443 875 442 870 413Z" fill="#ef6a5a"/>
<path d="M848 515 845 580 975 580 972 510 1000 520 1040 790 1072 1020Q900 1055 742 1015L785 795 820 525Z" fill="#ffca66"/>
<circle cx="835" cy="602" r="14" fill="#9a5f1e"/><circle cx="982" cy="602" r="14" fill="#9a5f1e"/>
<path d="M785 795Q920 810 1045 792M780 825Q920 840 1048 825" stroke="#f9ab3a" stroke-width="3" fill="none"/>
<path d="M908 665C940 660 980 680 980 720 980 765 950 785 915 775 880 790 838 765 838 720 838 685 870 660 908 665Z" fill="#e45c36"/>
<ellipse cx="862" cy="703" rx="13" ry="16" fill="#f59a80"/>
<path d="M870 665C890 660 900 665 905 660L915 648 922 665C935 665 945 670 952 678L925 680 935 695 905 685 890 698 892 680Z" fill="#4a9c3a"/>
<path d="M1050 815C1080 795 1100 785 1118 787 1125 810 1120 845 1112 862 1090 855 1070 835 1050 820Z" fill="none" stroke="#ffca66" stroke-width="13" stroke-linejoin="round"/>
<path d="M1058 860 1120 945 1085 975 1055 880Z" fill="#ffca66"/>
<path d="M1110 560C1125 530 1170 530 1190 555 1200 590 1170 625 1140 620 1115 610 1100 590 1110 560Z" fill="#ffd8c2"/>
<path d="M1170 420 1132 620" stroke="#b5b4ad" stroke-width="18" stroke-linecap="round"/>
<path d="M1155 300 1150 385C1160 410 1195 410 1205 380L1213 305 1203 305 1193 370 1187 300 1178 300 1176 370 1165 300Z" fill="#b5b4ad"/>
<path d="M1110 555C1130 540 1170 550 1185 565 1195 590 1170 620 1145 610 1120 600 1105 580 1110 555Z" fill="#ffd8c2"/>
<path d="M712 900C720 870 770 860 778 895 785 925 770 955 750 950 725 945 708 925 712 900Z" fill="#ffd8c2"/>
</g>
</svg>

<!-- right buttons -->
<div class="btn" style="top:154px"><span>撤销</span></div>
<div class="btn" style="top:208px"><span>复制</span></div>
<div class="btn" style="top:262px"><span>保存</span></div>
<div class="btn" style="top:316px"><span>同步</span></div>
<div class="btn" style="top:370px"><span>预览</span></div>
<div class="btn" style="top:424px"><span>清空</span></div>
<div class="btn" style="top:478px"><span>导入</span></div>
<div class="btn" style="top:532px"><span>更多</span></div>
<svg style="left:1331px;top:140px" width="40" height="440">
<g class="ic" style="stroke:#444;stroke-width:1.400">
<path d="M17 27l-4 3.500 4 3.500M13 30.500h11c4 0 4 10 0 10H15"/>
<path d="M19 82h5c2 0 3 1 3 3v11H18c-2 0-3-1-3-3v-6zM18 82c-2 0-5 4-5 6v8c0 1 1 1.500 2 1.500"/>
<path d="M14 136h10l4 3v12H14zM18 136v5h7v-5M18 151v-6h7v6"/>
<path d="M13 195h16l-4-3M29 200H13l4 3"/>
<path d="M12.500 251c4-7 13-7 17 0-4 7-13 7-17 0z"/><circle cx="21" cy="251" r="2.800"/>
<path d="M13 300h16M18 300v-2.500h6v2.500M15 300v12h12v-12M19 304v5M23 304v5"/>
<path d="M23 352h-9v14h9M28 359h-10M21 355l-4 4 4 4"/>
</g>
<g fill="#444"><circle cx="15" cy="414" r="1.800"/><circle cx="21" cy="414" r="1.800"/><circle cx="27" cy="414" r="1.800"/></g>
</svg>

<!-- annotation -->
<div class="a" style="left:1313px;top:256px;width:105px;height:59px;border:4.500px solid #17acff"></div>
<svg style="left:1430px;top:320px" width="115" height="150">
<path d="M9 6 32 21 25 24 104 143 19 27 14 33Z" fill="#17acff"/>
</svg>
</body></html>
